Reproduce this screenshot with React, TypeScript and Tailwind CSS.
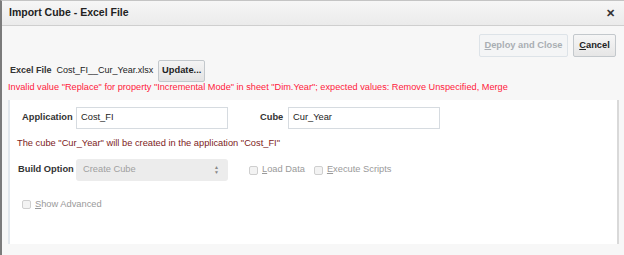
import React from "react";

function Check({ u, rest }: { u: string; rest: string }) {
  return (
    <label className="flex items-center whitespace-nowrap text-[9.3px] text-[#9a9a9a]">
      <span className="w-[9px] h-[9px] rounded-[2px] border border-[#cfcfcf] bg-[#f3f3f3]" />
      <span className="ml-[4px]">
        <span className="underline">{u}</span>
        {rest}
      </span>
    </label>
  );
}

export default function App() {
  return (
    <div
      className="w-[624px] h-[255px] bg-[#f7f7f7] border-l-2 border-l-[#7b7b7b] border-t border-t-[#c4c4c4] flex flex-col overflow-hidden"
      style={{ fontFamily: '"Liberation Sans", Arial, sans-serif' }}
    >
      <div className="h-[25px] shrink-0 flex items-center justify-between pl-[7px] pr-[9px] bg-gradient-to-b from-[#f6f6f6] to-[#ebebeb] border-b border-b-[#cfcfcf]">
        <span className="text-[10.5px] font-bold text-[#222] whitespace-nowrap">Import Cube - Excel File</span>
        <span className="text-[11px] font-bold text-[#333] leading-none">✕</span>
      </div>
      <div className="flex justify-end gap-[5px] pr-[8px] pt-[8px] shrink-0">
        <button className="h-[23px] w-[89px] rounded-[2px] border border-[#dde3e8] bg-[#f4f5f6] text-[9.3px] font-bold text-[#a9aeb3] whitespace-nowrap">
          <span className="underline">D</span>eploy and Close
        </button>
        <button className="h-[23px] w-[43px] rounded-[2px] border border-[#c3c8cc] bg-gradient-to-b from-[#f6f6f6] to-[#e6e6e6] text-[9.3px] font-bold text-[#222]">
          <span className="underline">C</span>ancel
        </button>
      </div>
      <div className="flex items-center pl-[8px] mt-[3px] h-[22px] shrink-0">
        <span className="text-[9px] font-bold text-[#333] whitespace-nowrap">Excel File</span>
        <span className="ml-[5px] text-[9px] text-[#222] whitespace-nowrap">Cost_FI__Cur_Year.xlsx</span>
        <button className="ml-[5px] h-[22px] w-[47px] rounded-[2px] border border-[#c3c8cc] bg-gradient-to-b from-[#f4f4f4] to-[#e3e3e3] text-[9.3px] font-bold text-[#222]">
          Update...
        </button>
      </div>
      <div className="pl-[6px] text-[9.2px] text-[#ff1a3c] leading-[12px] mt-[-1px] whitespace-nowrap shrink-0">
        Invalid value "Replace" for property "Incremental Mode" in sheet "Dim.Year"; expected values: Remove Unspecified, Merge
      </div>
      <div className="mt-[7px] ml-[6px] mr-[5px] h-[144px] shrink-0 bg-white border-l-2 border-l-[#e2e7ec] border-r-2 border-r-[#d9d9d9] pt-[7px]">
        <div className="flex items-center h-[22px]">
          <span className="ml-[12px] w-[54px] text-[9.3px] font-bold text-[#333] whitespace-nowrap">Application</span>
          <div className="w-[152px] h-[22px] border border-[#d6dbe0] flex items-center pl-[4px] text-[9.3px] text-[#222]">Cost_FI</div>
          <span className="ml-[32px] w-[28px] text-[9.3px] font-bold text-[#333]">Cube</span>
          <div className="w-[152px] h-[22px] border border-[#d6dbe0] flex items-center pl-[4px] text-[9.3px] text-[#222]">Cur_Year</div>
        </div>
        <div className="mt-[8px] ml-[7px] text-[9.3px] text-[#7d1c1c] leading-[12px] whitespace-nowrap">
          The cube "Cur_Year" will be created in the application "Cost_FI"
        </div>
        <div className="flex items-center h-[22px] mt-[10px]">
          <span className="ml-[8px] w-[58px] text-[9.3px] font-bold text-[#333] whitespace-nowrap">Build Option</span>
          <div className="w-[152px] h-[22px] rounded-[3px] bg-[#ececec] flex items-center justify-between pl-[7px] pr-[9px] text-[9.3px] text-[#a0a0a0]">
            <span>Create Cube</span>
            <span className="flex flex-col text-[5px] leading-[5px] text-[#888]">
              <span>▲</span>
              <span>▼</span>
            </span>
          </div>
          <div className="ml-[21px]">
            <Check u="L" rest="oad Data" />
          </div>
          <div className="ml-[9px]">
            <Check u="E" rest="xecute Scripts" />
          </div>
        </div>
        <div className="mt-[17px] ml-[12px]">
          <Check u="S" rest="how Advanced" />
        </div>
      </div>
    </div>
  );
}
